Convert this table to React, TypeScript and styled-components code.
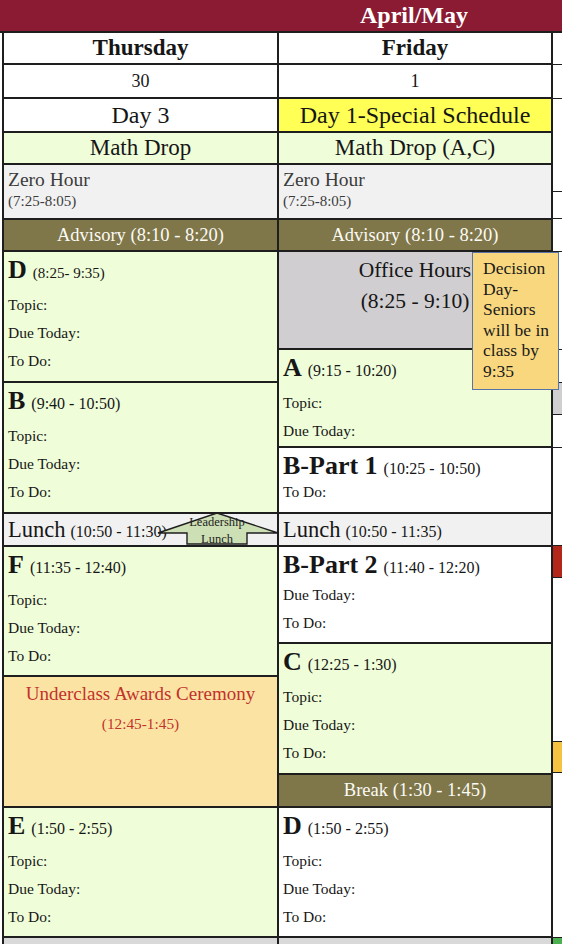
import React from 'react';
import styled, { createGlobalStyle } from 'styled-components';

const LINE = '#1e1e1e';
const GREEN = '#effdd9';
const OLIVE = '#7f764a';
const GRAY = '#f1f1f1';

const GlobalStyle = createGlobalStyle`
  html, body {
    margin: 0;
    padding: 0;
    background: #fff;
  }
  body {
    font-family: "Liberation Serif", "DejaVu Serif", serif;
    color: #161616;
    overflow: hidden;
  }
`;

const Page = styled.div`
  position: relative;
  width: 562px;
  height: 944px;
  overflow: hidden;
`;

const Banner = styled.div`
  height: 33px;
  box-sizing: border-box;
  background: #8a1b32;
  border-bottom: 2px solid ${LINE};
  color: #fff;
  font-weight: bold;
  font-size: 24px;
  line-height: 31px;
  padding-left: 360px;
  white-space: nowrap;
`;

const Columns = styled.div`
  display: flex;
  margin-left: 2px;
  border-left: 2px solid ${LINE};
`;

const DayColumn = styled.div<{ $w: number }>`
  width: ${(p) => p.$w}px;
  flex-shrink: 0;
  display: flex;
  flex-direction: column;
`;

const EdgeColumn = styled.div`
  flex: 1;
  display: flex;
  flex-direction: column;
`;

const Cell = styled.div<{ $h: number; $bg?: string }>`
  box-sizing: border-box;
  height: ${(p) => p.$h}px;
  flex-shrink: 0;
  background: ${(p) => p.$bg ?? '#fff'};
  border-right: 2px solid ${LINE};
  border-bottom: 2px solid ${LINE};
  overflow: hidden;
  white-space: nowrap;
`;

const CenterCell = styled(Cell)<{ $size: number; $bold?: boolean }>`
  display: flex;
  align-items: center;
  justify-content: center;
  font-size: ${(p) => p.$size}px;
  font-weight: ${(p) => (p.$bold ? 'bold' : 'normal')};
`;

const BandCell = styled(CenterCell)`
  background: ${OLIVE};
  color: #fbfbf5;
`;

const ZeroCell = styled(Cell)`
  padding: 3px 0 0 4px;
  color: #3c3c3c;
`;

const ZeroTitle = styled.div`
  font-size: 19.5px;
  line-height: 23px;
`;

const ZeroTime = styled.div`
  font-size: 15px;
  line-height: 20px;
`;

const PeriodCell = styled(Cell)`
  padding-left: 4px;
`;

const Heading = styled.div<{ $h: number }>`
  height: ${(p) => p.$h}px;
  line-height: 36px;
  display: flex;
  align-items: baseline;
  gap: 6px;
`;

const Letter = styled.span`
  font-size: 26px;
  font-weight: bold;
`;

const Time = styled.span<{ $size?: number }>`
  font-size: ${(p) => p.$size ?? 16}px;
`;

const Field = styled.div`
  font-size: 15.5px;
  line-height: 28px;
`;

const LunchCell = styled(Cell)`
  background: ${GRAY};
  padding-left: 4px;
  display: flex;
  align-items: baseline;
  gap: 5px;
  line-height: 31px;
`;

const LunchWord = styled.span`
  font-size: 22.5px;
`;

const EventCell = styled(Cell)`
  background: #fbe3a4;
  color: #c2322a;
  text-align: center;
  padding-top: 5px;
`;

const EventTitle = styled.div`
  font-size: 19px;
  line-height: 24px;
`;

const EventTime = styled.div`
  font-size: 15.3px;
  line-height: 20px;
  margin-top: 8px;
`;

const OfficeCell = styled(Cell)`
  background: #d0ced0;
  text-align: center;
  font-size: 21.5px;
  line-height: 31px;
  padding-top: 3px;
`;

const EdgeCell = styled.div<{ $h?: number; $bg?: string }>`
  box-sizing: border-box;
  height: ${(p) => (p.$h ? `${p.$h}px` : 'auto')};
  flex: ${(p) => (p.$h ? '0 0 auto' : '1')};
  background: ${(p) => p.$bg ?? '#fff'};
  border-bottom: 1px solid ${LINE};
`;

const Note = styled.div`
  position: absolute;
  left: 472px;
  top: 252px;
  width: 87px;
  height: 138px;
  box-sizing: border-box;
  background: #f9d77e;
  border: 1.5px solid #5874a6;
  padding: 5px 0 0 10px;
  font-size: 17.5px;
  line-height: 20.5px;
  color: #1a1a1a;
`;

const Arrow = styled.svg`
  position: absolute;
  left: 157px;
  top: 512px;
  width: 122px;
  height: 33px;
  overflow: hidden;
`;

type Period = {
  kind: 'period';
  letter: string;
  time: string;
  fields: string[];
  h: number;
  bg: string;
  head?: number;
  timeSize?: number;
};

type Block =
  | Period
  | { kind: 'lunch'; time: string; h: number }
  | { kind: 'event'; h: number }
  | { kind: 'office'; h: number }
  | { kind: 'band'; text: string; h: number }
  | { kind: 'rest'; h: number };

const ALL = ['Topic:', 'Due Today:', 'To Do:'];

const thursday: Block[] = [
  { kind: 'period', letter: 'D', time: '(8:25- 9:35)', fields: ALL, h: 131, bg: GREEN, timeSize: 15 },
  { kind: 'period', letter: 'B', time: '(9:40 - 10:50)', fields: ALL, h: 131, bg: GREEN },
  { kind: 'lunch', time: '(10:50 - 11:30)', h: 33 },
  { kind: 'period', letter: 'F', time: '(11:35 - 12:40)', fields: ALL, h: 130, bg: GREEN },
  { kind: 'event', h: 131 },
  { kind: 'period', letter: 'E', time: '(1:50 - 2:55)', fields: ALL, h: 130, bg: GREEN },
  { kind: 'rest', h: 30 },
];

const friday: Block[] = [
  { kind: 'office', h: 98 },
  { kind: 'period', letter: 'A', time: '(9:15 - 10:20)', fields: ['Topic:', 'Due Today:'], h: 98, bg: GREEN },
  { kind: 'period', letter: 'B-Part 1', time: '(10:25 - 10:50)', fields: ['To Do:'], h: 66, bg: '#fff', head: 30 },
  { kind: 'lunch', time: '(10:50 - 11:35)', h: 33 },
  { kind: 'period', letter: 'B-Part 2', time: '(11:40 - 12:20)', fields: ['Due Today:', 'To Do:'], h: 97, bg: '#fff', head: 34 },
  { kind: 'period', letter: 'C', time: '(12:25 - 1:30)', fields: ALL, h: 131, bg: GREEN },
  { kind: 'band', text: 'Break (1:30 - 1:45)', h: 33 },
  { kind: 'period', letter: 'D', time: '(1:50 - 2:55)', fields: ALL, h: 130, bg: '#fff' },
  { kind: 'rest', h: 30 },
];

const edge: { h?: number; bg?: string }[] = [
  { h: 32 }, { h: 34 }, { h: 93 }, { h: 27 }, { h: 33 }, { h: 98 }, { h: 33 },
  { h: 32, bg: '#d0ced0' }, { h: 33 }, { h: 98 }, { h: 32, bg: '#b3261a' },
  { h: 164 }, { h: 31, bg: '#f5c242' }, { h: 165 }, { bg: '#4caf50' },
];

function BlockCell({ b }: { b: Block }) {
  switch (b.kind) {
    case 'period':
      return (
        <PeriodCell $h={b.h} $bg={b.bg}>
          <Heading $h={b.head ?? 39}>
            <Letter>{b.letter}</Letter>
            <Time $size={b.timeSize}>{b.time}</Time>
          </Heading>
          {b.fields.map((f) => (
            <Field key={f}>{f}</Field>
          ))}
        </PeriodCell>
      );
    case 'lunch':
      return (
        <LunchCell $h={b.h}>
          <LunchWord>Lunch</LunchWord>
          <Time>{b.time}</Time>
        </LunchCell>
      );
    case 'event':
      return (
        <EventCell $h={b.h}>
          <EventTitle>Underclass Awards Ceremony</EventTitle>
          <EventTime>(12:45-1:45)</EventTime>
        </EventCell>
      );
    case 'office':
      return (
        <OfficeCell $h={b.h}>
          <div>Office Hours</div>
          <div>(8:25 - 9:10)</div>
        </OfficeCell>
      );
    case 'band':
      return (
        <BandCell $h={b.h} $size={18.5}>
          {b.text}
        </BandCell>
      );
    default:
      return <Cell $h={b.h} $bg="#d9d9d9" />;
  }
}

function Day({ name, date, day, dayBg, drop, blocks, w }: {
  name: string;
  date: string;
  day: string;
  dayBg?: string;
  drop: string;
  blocks: Block[];
  w: number;
}) {
  return (
    <DayColumn $w={w}>
      <CenterCell $h={32} $size={23} $bold>{name}</CenterCell>
      <CenterCell $h={34} $size={18}>{date}</CenterCell>
      <CenterCell $h={34} $size={24} $bg={dayBg}>{day}</CenterCell>
      <CenterCell $h={32} $size={23} $bg={GREEN}>{drop}</CenterCell>
      <ZeroCell $h={55} $bg={GRAY}>
        <ZeroTitle>Zero Hour</ZeroTitle>
        <ZeroTime>(7:25-8:05)</ZeroTime>
      </ZeroCell>
      <BandCell $h={32} $size={18.5}>Advisory (8:10 - 8:20)</BandCell>
      {blocks.map((b, i) => (
        <BlockCell key={i} b={b} />
      ))}
    </DayColumn>
  );
}

export default function App() {
  return (
    <Page>
      <GlobalStyle />
      <Banner>April/May</Banner>
      <Columns>
        <Day name="Thursday" date="30" day="Day 3" drop="Math Drop" blocks={thursday} w={275} />
        <Day
          name="Friday"
          date="1"
          day="Day 1-Special Schedule"
          dayBg="#ffff55"
          drop="Math Drop (A,C)"
          blocks={friday}
          w={274}
        />
        <EdgeColumn>
          {edge.map((e, i) => (
            <EdgeCell key={i} $h={e.h} $bg={e.bg} />
          ))}
        </EdgeColumn>
      </Columns>
      <Arrow viewBox="0 0 122 33">
        <polygon
          points="1,21 60,1 121,21 90,21 90,32 30,32 30,21"
          fill="#cddfb4"
          stroke="#1e1e1e"
          strokeWidth="1.4"
          strokeLinejoin="miter"
        />
        <text x="60" y="14" textAnchor="middle" fontSize="12.5" fontFamily="Liberation Serif, serif" fill="#222">
          Leadership
        </text>
        <text x="60" y="31" textAnchor="middle" fontSize="12.5" fontFamily="Liberation Serif, serif" fill="#222">
          Lunch
        </text>
      </Arrow>
      <Note>
        Decision
        <br />
        Day-
        <br />
        Seniors
        <br />
        will be in
        <br />
        class by
        <br />
        9:35
      </Note>
    </Page>
  );
}
